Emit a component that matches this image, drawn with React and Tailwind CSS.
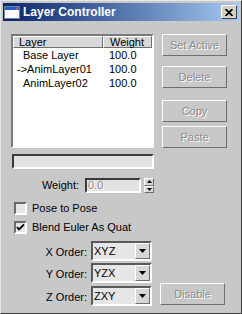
const raised = "border border-t-white border-l-white border-b-[#6f6f6f] border-r-[#6f6f6f]";
const sunken = "border border-t-[#5a5a5a] border-l-[#5a5a5a] border-b-white border-r-white";
const etched = "text-[#8c8c8c] [text-shadow:1px_1px_0_#ffffff]";

function Btn({ children, className = "" }) {
    return (
        <div className={`flex h-[22px] w-[65px] items-center justify-center ${raised} ${etched} ${className}`}>
            {children}
        </div>
    );
}

function Check({ checked }) {
    return (
        <div className={`flex h-[13px] w-[13px] items-center justify-center border-2 border-t-[#6a6a6a] border-l-[#6a6a6a] border-b-white border-r-white bg-[#e6e6e6]`}>
            {checked && (
                <svg width="9" height="9" viewBox="0 0 9 9">
                    <path d="M1 4 L3 6.5 L8 1.5" fill="none" stroke="#000" strokeWidth="1.8" />
                </svg>
            )}
        </div>
    );
}

function OrderRow({ label, value, children, className = "" }) {
    return (
        <div className={`flex items-end ${className}`}>
            <span className="mb-[3px] w-[84px] text-right">{label}</span>
            <div className="ml-[4px] flex h-[20px] w-[61px] items-center border-2 border-t-[#5a5a5a] border-l-[#5a5a5a] border-b-white border-r-white bg-[#e6e6e6]">
                <span className="flex-1 pl-[1px] text-black">{value}</span>
                <div className={`mr-[0px] flex h-[16px] w-[15px] items-center justify-center bg-[#d6d6d6] ${raised}`}>
                    <svg width="7" height="4" viewBox="0 0 7 4">
                        <path d="M0 0 H7 L3.5 4 Z" fill="#000" />
                    </svg>
                </div>
            </div>
            {children}
        </div>
    );
}

export default function App() {
    const rows = [
        { name: "Base Layer", w: "100.0", pad: "pl-[10px]" },
        { name: "->AnimLayer01", w: "100.0", pad: "pl-[4px]" },
        { name: "AnimLayer02", w: "100.0", pad: "pl-[10px]" },
    ];

    return (
        <div className="flex h-[314px] w-[242px] flex-col border border-t-[#e8e8e8] border-l-[#e8e8e8] border-b-[#3a3a3a] border-r-[#3a3a3a] bg-[#c8c8c8] px-[2px] pt-[2px] font-['Liberation_Sans',Arial,sans-serif] text-[11px] leading-none text-black">
            {/* Title bar */}
            <div className="flex h-[18px] items-center bg-gradient-to-r from-[#0a246a] to-[#a6caf0] pl-[1px] pr-[2px]">
                <svg width="16" height="13" viewBox="0 0 16 13">
                    <rect x="0.5" y="0.5" width="15" height="12" fill="#ffffff" stroke="#6a7ea8" />
                    <rect x="1" y="1" width="14" height="3" fill="#2a5ad0" />
                    <rect x="12" y="1.5" width="2" height="2" fill="#e05a2a" />
                </svg>
                <span className="ml-[3px] text-[12px] font-bold text-white">Layer Controller</span>
                <div className={`ml-auto flex h-[14px] w-[16px] items-center justify-center bg-[#d4d0c8] ${raised} border-b-[#404040] border-r-[#404040]`}>
                    <svg width="8" height="7" viewBox="0 0 8 7">
                        <path d="M0.5 0 L7.5 7 M7.5 0 L0.5 7" stroke="#000" strokeWidth="1.7" />
                    </svg>
                </div>
            </div>

            {/* List + buttons */}
            <div className="mt-[13px] flex">
                <div className="ml-[8px] flex h-[114px] w-[143px] flex-col border-2 border-t-[#7a7a7a] border-l-[#7a7a7a] border-b-white border-r-white bg-white">
                    <div className="flex h-[12px] bg-[#d8d8d8]">
                        <div className={`flex w-[90px] items-center pl-[5px] ${raised}`}>Layer</div>
                        <div className={`flex flex-1 items-center pl-[6px] ${raised}`}>Weight</div>
                    </div>
                    {rows.map((r) => (
                        <div key={r.name} className="flex h-[14px] items-center">
                            <span className={`w-[96px] ${r.pad}`}>{r.name}</span>
                            <span>{r.w}</span>
                        </div>
                    ))}
                </div>
                <div className="ml-[8px] flex flex-col">
                    <Btn>Set Active</Btn>
                    <Btn className="mt-[10px]">Delete</Btn>
                    <Btn className="mt-[12px]">Copy</Btn>
                    <Btn className="mt-[4px]">Paste</Btn>
                </div>
            </div>

            {/* Name bar */}
            <div className="ml-[9px] mt-[6px] h-[15px] w-[142px] border-2 border-t-[#3a3a3a] border-l-[#3a3a3a] border-b-white border-r-white bg-[#e2e2e2]" />

            {/* Weight */}
            <div className="mt-[9px] flex h-[15px] items-center">
                <span className="w-[76px] text-right">Weight:</span>
                <div className="ml-[6px] flex h-[15px] w-[56px] items-center border-2 border-t-[#3a3a3a] border-l-[#3a3a3a] border-b-white border-r-white bg-[#e2e2e2] pl-[1px]">
                    <span className={etched}>0.0</span>
                </div>
                <div className="ml-[3px] flex h-[15px] w-[10px] flex-col">
                    <div className={`flex flex-1 items-center justify-center bg-[#d6d6d6] ${raised}`}>
                        <svg width="5" height="3" viewBox="0 0 5 3"><path d="M0 3 H5 L2.5 0 Z" fill="#000" /></svg>
                    </div>
                    <div className={`flex flex-1 items-center justify-center bg-[#d6d6d6] ${raised}`}>
                        <svg width="5" height="3" viewBox="0 0 5 3"><path d="M0 0 H5 L2.5 3 Z" fill="#000" /></svg>
                    </div>
                </div>
            </div>

            {/* Checkboxes */}
            <div className="ml-[11px] mt-[9px] flex items-center gap-[5px]">
                <Check />
                <span>Pose to Pose</span>
            </div>
            <div className="ml-[11px] mt-[6px] flex items-center gap-[5px]">
                <Check checked />
                <span>Blend Euler As Quat</span>
            </div>

            {/* Orders */}
            <OrderRow label="X Order:" value="XYZ" className="mt-[7px]" />
            <OrderRow label="Y Order:" value="YZX" className="mt-[2px]" />
            <OrderRow label="Z Order:" value="ZXY">
                <Btn className="mb-[1px] ml-[8px]">Disable</Btn>
            </OrderRow>
        </div>
    );
}
